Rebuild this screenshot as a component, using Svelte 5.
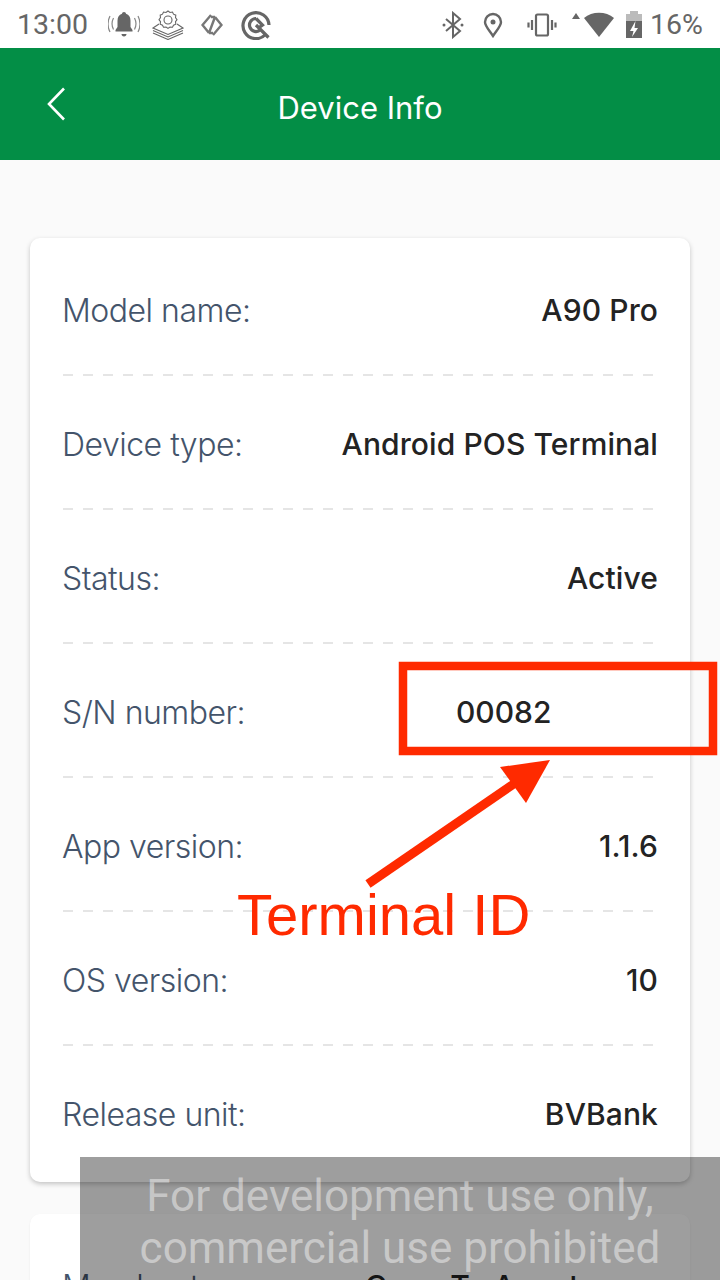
<script>
  const rows = [
    ['Model name:', 'A90 Pro'],
    ['Device type:', 'Android POS Terminal'],
    ['Status:', 'Active'],
    ['S/N number:', ''],
    ['App version:', '1.1.6'],
    ['OS version:', '10'],
    ['Release unit:', 'BVBank']
  ];
</script>

<div class="screen">
  <header class="status">
    <div class="group">
      <span class="time">13:00</span>
      <svg class="ic bell" width="32" height="30" viewBox="0 0 32 30" fill="none"><path d="M16 2c1.200 0 1.900.8 2 1.800 3 1 4.500 3.600 4.500 6.900v6.300l2 3v1.500h-17V20l2-3v-6.300c0-3.300 1.500-5.900 4.500-6.900.1-1 .8-1.800 2-1.800zM13.500 24h5c0 1.500-1 2.500-2.500 2.500s-2.500-1-2.500-2.500z" fill="#666"/><path d="M5.500 8c-1.800 3.500-1.800 8 0 11.500M2 6c-2.500 5-2.500 11 0 16M26.500 8c1.800 3.500 1.800 8 0 11.500M30 6c2.500 5 2.500 11 0 16" stroke="#888" stroke-width="1.200"/></svg>
      <svg class="ic gear" width="32" height="30" viewBox="0 0 32 30" fill="none" stroke="#666" stroke-width="1.100"><path d="M16 1l2 1.500 2.500-.5 1 2.200 2.300 1-.3 2.500 1.500 2-1.500 2 .3 2.500-2.300 1-1 2-2.500-.2-2 1.400-2-1.400-2.500.2-1-2-2.300-1 .3-2.500-1.500-2 1.500-2-.3-2.500 2.300-1 1-2.200 2.500.5z"/><circle cx="16" cy="10" r="4"/><path d="M7 14l-6 4 15 6.500L31 18l-6-4M1 20.500l15 6.500 15-6.500M1 23l15 6.500L31 23"/></svg>
      <svg class="ic sync" width="22" height="24" viewBox="0 0 22 24" fill="none" stroke="#777" stroke-width="2.400"><path d="M10 2L1.500 12 8 20M12 22l8.500-10L14 4M14 4H10M8 20h4M14 4L8 20"/></svg>
      <svg class="ic q" width="30" height="30" viewBox="0 0 30 30" fill="none" stroke="#666" stroke-width="3.200"><path d="M24.500 24.500A13 13 0 1 1 28 15"/><path d="M15 8.500a6.500 6.500 0 1 0 4.500 11.200"/><path d="M15 8.500l6.500 6.500-4 3M15 15l12.500 12.500"/></svg>
    </div>
    <div class="group">
      <svg class="ic" width="24" height="28" viewBox="0 0 24 28" fill="none" stroke="#666" stroke-width="2"><path d="M5 8l14 12-7 6V2l7 6L5 20"/><circle cx="3" cy="14" r="1.500" fill="#666" stroke="none"/><circle cx="21" cy="14" r="1.500" fill="#666" stroke="none"/></svg>
      <svg class="ic pin" width="20" height="26" viewBox="0 0 20 26" fill="none" stroke="#666" stroke-width="2.400"><path d="M10 24C6 18 2 14 2 10a8 8 0 0 1 16 0c0 4-4 8-8 14z"/><circle cx="10" cy="10" r="2.500" fill="#666" stroke="none"/></svg>
      <svg class="ic vib" width="30" height="26" viewBox="0 0 30 26" fill="none" stroke="#666" stroke-width="2.200"><rect x="9" y="2.500" width="12" height="21" rx="1.500"/><path d="M5 8v10M1.500 10.500v5M25 8v10M28.500 10.500v5"/></svg>
      <svg class="ic wifi" width="45" height="26" viewBox="0 0 45 26"><path d="M2 7l4-6 4 6z" fill="#666"/><path d="M14 6C22-1 36-1 44 6L29 25z" fill="#666"/></svg>
      <svg class="ic batt" width="18" height="28" viewBox="0 0 18 28"><path d="M5 0h8v3h4v7H1V3h4z" fill="#bbb"/><path d="M1 10h16v17H1z" fill="#666"/><path d="M10.500 10L5 20h3.500L7 26l6-9H9.500z" fill="#fff"/></svg>
      <span class="pct">16%</span>
    </div>
  </header>

  <nav class="appbar">
    <svg class="back" width="20" height="34" viewBox="0 0 20 34" fill="none" stroke="#fff" stroke-width="2.600"><path d="M18 1.500L3 17l15 15.500"/></svg>
    <h1>Device Info</h1>
  </nav>

  <main>
    <section class="card first">
      {#each rows as [label, value], i}
        <div class="row" class:last={i === rows.length - 1}>
          <span class="label">{label}</span>
          <span class="value">{value}</span>
        </div>
      {/each}
    </section>
    <section class="card">
      <div class="row">
        <span class="label">Merchant:</span>
        <span class="value">Cong Ty Agent zone</span>
      </div>
    </section>
  </main>

  <svg class="arrow" width="720" height="1280" viewBox="0 0 720 1280" aria-hidden="true">
    <rect x="403" y="666" width="310" height="85" fill="none" stroke="#ff2a00" stroke-width="8.500"/>
    <path d="M368 884L518 781" stroke="#ff2a00" stroke-width="9" fill="none"/>
    <path d="M550 760L500 767 526 803z" fill="#ff2a00"/>
  </svg>
  <span class="sn">00082</span>
  <span class="tid">Terminal ID</span>

  <div class="watermark">
    <span>For development use only,</span>
    <span>commercial use prohibited</span>
  </div>
</div>

<style>
  :global(body) {
    margin: 0;
    background: #fafafa;
  }
  .screen {
    position: relative;
    width: 720px;
    height: 1280px;
    overflow: hidden;
    background: #fafafa;
    font-family: Inter, "Noto Sans", sans-serif;
  }
  .status {
    height: 48px;
    background: #fff;
    display: flex;
    align-items: center;
    justify-content: space-between;
    padding: 2px 17px 0 17px;
    box-sizing: border-box;
    font-family: Roboto, sans-serif;
    color: #666;
  }
  .group {
    display: flex;
    align-items: center;
  }
  .ic {
    display: block;
    flex: none;
  }
  .bell { margin-left: 20px; }
  .gear { margin-left: 12px; }
  .sync { margin-left: 17px; }
  .q { margin-left: 18px; }
  .pin { margin-left: 18px; }
  .vib { margin-left: 24px; }
  .wifi { margin-left: 13px; }
  .batt { margin-left: 10px; }
  .time,
  .pct {
    font-size: 28.500px;
    line-height: 46px;
    color: #666;
  }
  .pct {
    margin-left: 7px;
  }
  .appbar {
    position: relative;
    height: 112px;
    background: #038e46;
    display: flex;
    align-items: center;
    justify-content: center;
    padding-top: 6px;
    box-sizing: border-box;
  }
  .back {
    position: absolute;
    left: 46px;
    top: 39px;
  }
  h1 {
    margin: 0;
    color: #fff;
    font-size: 31px;
    font-weight: 400;
  }
  main {
    padding: 78px 30px 0;
    display: flex;
    flex-direction: column;
    gap: 32px;
  }
  .card {
    background: #fff;
    border-radius: 10px;
    box-shadow: 0 1px 2px rgba(0, 0, 0, 0.08);
    padding: 4px 32px 0 33px;
  }
  .first {
    height: 944px;
    box-sizing: border-box;
    box-shadow: 0 2px 5px rgba(0, 0, 0, 0.22);
  }
  .row {
    height: 134px;
    box-sizing: border-box;
    padding-top: 2px;
    display: flex;
    justify-content: space-between;
    align-items: center;
    background-image: repeating-linear-gradient(90deg, #e5e5e5 0 10px, transparent 10px 20px);
    background-size: 590px 2px;
    background-repeat: no-repeat;
    background-position: left bottom;
  }
  .row.last {
    background-image: none;
  }
  .label {
    margin-left: -1px;
    font-size: 32px;
    font-weight: 300;
    color: #44546b;
    letter-spacing: -0.5px;
  }
  .value {
    font-size: 30px;
    font-weight: 500;
    color: #232323;
    letter-spacing: 0.1px;
  }
  .arrow {
    position: absolute;
    inset: 0;
    pointer-events: none;
  }
  .sn {
    position: absolute;
    left: 456px;
    top: 694px;
    font-size: 30px;
    line-height: 36px;
    font-weight: 500;
    color: #232323;
  }
  .tid {
    position: absolute;
    left: 237px;
    top: 882px;
    font-family: "Liberation Sans", sans-serif;
    font-size: 58px;
    line-height: 66px;
    color: #ff2a00;
    white-space: nowrap;
  }
  .watermark {
    position: absolute;
    left: 80px;
    top: 1157px;
    right: 0;
    height: 123px;
    background: rgba(0, 0, 0, 0.38);
    display: flex;
    flex-direction: column;
    align-items: center;
    color: rgba(255, 255, 255, 0.45);
    font-family: Roboto, sans-serif;
    font-size: 44px;
    line-height: 52px;
    padding-top: 13px;
    box-sizing: border-box;
  }
</style>
